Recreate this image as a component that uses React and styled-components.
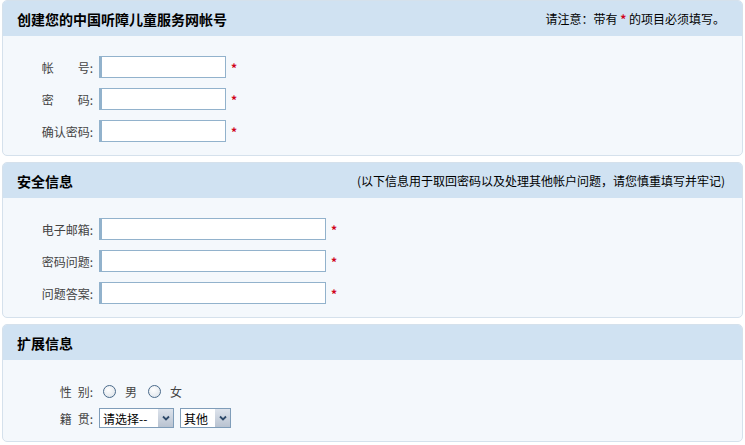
import React from "react";
import styled, { createGlobalStyle } from "styled-components";

const Global = createGlobalStyle`
  html, body { margin: 0; padding: 0; background: #fff; }
  body { font-family: "Noto Sans CJK SC", "Liberation Sans", sans-serif; font-size: 12px; color: #333; }
`;

const Page = styled.div`
  width: 741px; margin: 0 2px;
  display: flex; flex-direction: column; gap: 6px;
`;

const Panel = styled.section`
  border: 1px solid #d5e1ec; border-radius: 5px; background: #f4f8fc;
  overflow: hidden;
`;

const Header = styled.div`
  height: 35px; background: #d0e2f2;
  display: flex; align-items: center; justify-content: space-between;
  padding: 0 17px 0 14px;
`;

const Title = styled.h2`
  margin: 0; font-size: 14px; font-weight: bold; color: #000;
`;

const Note = styled.div`
  font-size: 12px; color: #000;
`;

const Star = styled.span`
  color: #d0021b; font-weight: bold; margin: 0 ${p => p.$gap || 0}px;
`;

const Body = styled.div`
  display: flex; flex-direction: column;
  gap: ${p => p.$gap}px;
  padding: ${p => p.$pad};
`;

const Row = styled.div`
  display: flex; align-items: center; gap: 6px; height: 22px;
`;

const Label = styled.span`
  width: 56px; padding-left: 34px; display: flex; justify-content: flex-end;
  color: #444; font-size: 12px; white-space: nowrap;
`;

const Spread = styled.span`
  width: ${p => p.$w}px; display: inline-block;
  text-align: justify; text-align-last: justify;
`;

const Input = styled.input`
  box-sizing: border-box; width: ${p => p.$w}px; height: 22px;
  border: 1px solid #92b2cc; border-left: 3px solid #92b2cc;
  background: #fff; outline: none; padding: 0 4px; font-size: 12px;
`;

const Radio = styled.input.attrs({ type: "radio" })`
  appearance: none; margin: 0; width: 13px; height: 13px; border-radius: 50%;
  border: 1px solid #4a6a8a; background: radial-gradient(circle at 40% 35%, #fff 0%, #e4e9ee 70%, #cfd6dd 100%);
`;

const Choices = styled.span`
  display: flex; align-items: center; gap: 11px; margin-left: 4px;
`;

const Choice = styled.label`
  display: flex; align-items: center; gap: 9px; color: #444;
  font-size: 12px;
`;

const SelectWrap = styled.span`
  position: relative; display: inline-block; height: 20px;
`;

const Select = styled.select`
  appearance: none; box-sizing: border-box; width: ${p => p.$w}px; height: 20px;
  border: 1px solid #7f9db9; background: #fff; padding: 0 0 0 3px;
  font-family: "Noto Sans CJK SC", sans-serif; font-size: 12px; color: #000; border-radius: 0;
`;

const Arrow = styled.span`
  position: absolute; right: 1px; top: 1px; width: 16px; height: 18px;
  background: linear-gradient(#dde3ec, #b9c3d1); border-left: 1px solid #fff;
  box-sizing: border-box; display: flex; align-items: center; justify-content: center;
  pointer-events: none;
`;

function Chevron() {
  return (
    <svg width="8" height="6" viewBox="0 0 8 6">
      <path d="M1 1.5 L4 4.5 L7 1.5" stroke="#2f4a6a" strokeWidth="1.8" fill="none" />
    </svg>
  );
}

function Field({ label, width }) {
  return (
    <Row>
      <Label>{label}</Label>
      <Input $w={width} />
      <Star $gap={-1}>*</Star>
    </Row>
  );
}

function Drop({ width, options }) {
  return (
    <SelectWrap>
      <Select $w={width}>
        {options.map(o => <option key={o}>{o}</option>)}
      </Select>
      <Arrow><Chevron /></Arrow>
    </SelectWrap>
  );
}

export default function App() {
  return (
    <>
      <Global />
      <Page>
        <Panel>
          <Header>
            <Title>创建您的中国听障儿童服务网帐号</Title>
            <Note>请注意：带有 <Star>*</Star> 的项目必须填写。</Note>
          </Header>
          <Body $gap={10} $pad="20px 0 13px">
            <Field label={<><Spread $w={48}>帐号</Spread>:</>} width={127} />
            <Field label={<><Spread $w={48}>密码</Spread>:</>} width={127} />
            <Field label="确认密码:" width={127} />
          </Body>
        </Panel>

        <Panel>
          <Header>
            <Title>安全信息</Title>
            <Note>(以下信息用于取回密码以及处理其他帐户问题，请您慎重填写并牢记)</Note>
          </Header>
          <Body $gap={10} $pad="20px 0 13px">
            <Field label="电子邮箱:" width={227} />
            <Field label="密码问题:" width={227} />
            <Field label="问题答案:" width={227} />
          </Body>
        </Panel>

        <Panel>
          <Header>
            <Title>扩展信息</Title>
          </Header>
          <Body $gap={5} $pad="20px 0 12px">
            <Row>
              <Label><Spread $w={30}>性别</Spread>:</Label>
              <Choices>
                <Choice><Radio name="sex" />男</Choice>
                <Choice><Radio name="sex" />女</Choice>
              </Choices>
            </Row>
            <Row>
              <Label><Spread $w={30}>籍贯</Spread>:</Label>
              <Drop width={75} options={["请选择--"]} />
              <Drop width={51} options={["其他"]} />
            </Row>
          </Body>
        </Panel>
      </Page>
    </>
  );
}
